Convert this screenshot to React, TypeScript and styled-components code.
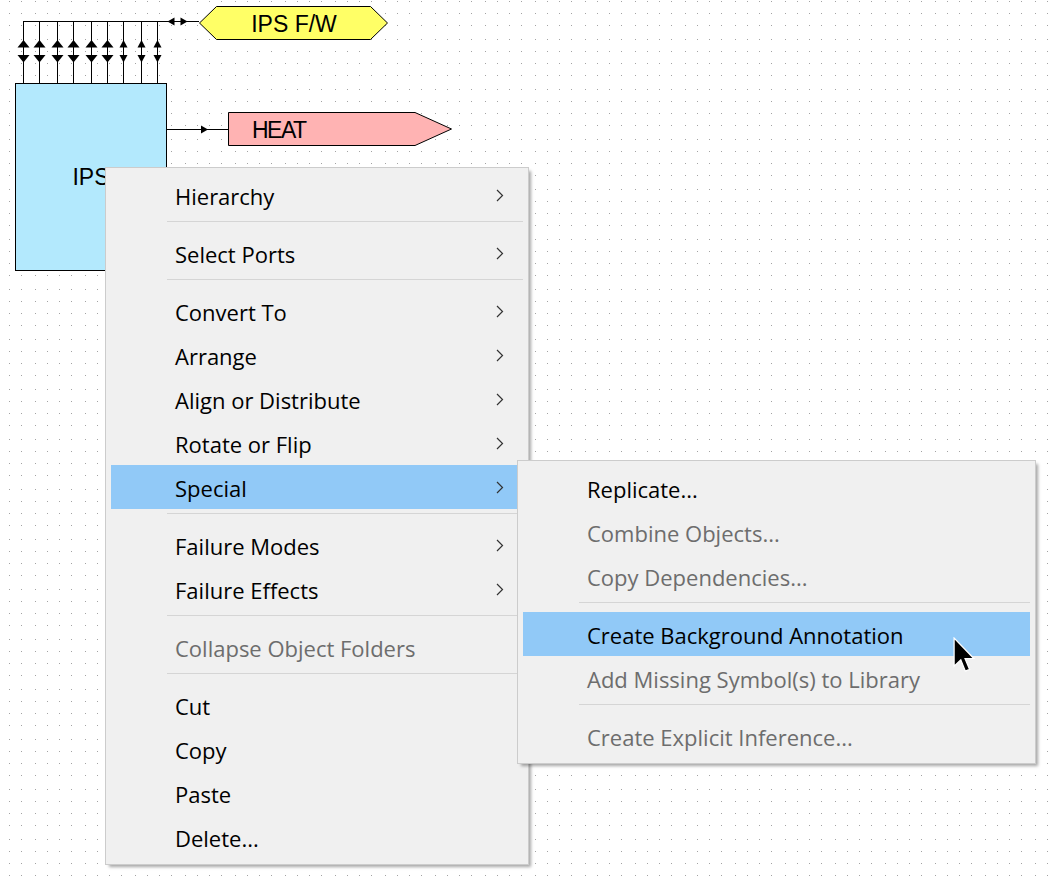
import styled, { createGlobalStyle } from "styled-components";

const GlobalStyle = createGlobalStyle`
  html, body {
    margin: 0;
    padding: 0;
    background: #ffffff;
  }
`;

type MenuEntry =
  | { kind: "item"; label: string; sub?: boolean; disabled?: boolean; active?: boolean }
  | { kind: "sep" };

const mainMenu: MenuEntry[] = [
  { kind: "item", label: "Hierarchy", sub: true },
  { kind: "sep" },
  { kind: "item", label: "Select Ports", sub: true },
  { kind: "sep" },
  { kind: "item", label: "Convert To", sub: true },
  { kind: "item", label: "Arrange", sub: true },
  { kind: "item", label: "Align or Distribute", sub: true },
  { kind: "item", label: "Rotate or Flip", sub: true },
  { kind: "item", label: "Special", sub: true, active: true },
  { kind: "sep" },
  { kind: "item", label: "Failure Modes", sub: true },
  { kind: "item", label: "Failure Effects", sub: true },
  { kind: "sep" },
  { kind: "item", label: "Collapse Object Folders", disabled: true },
  { kind: "sep" },
  { kind: "item", label: "Cut" },
  { kind: "item", label: "Copy" },
  { kind: "item", label: "Paste" },
  { kind: "item", label: "Delete..." },
];

const specialMenu: MenuEntry[] = [
  { kind: "item", label: "Replicate..." },
  { kind: "item", label: "Combine Objects...", disabled: true },
  { kind: "item", label: "Copy Dependencies...", disabled: true },
  { kind: "sep" },
  { kind: "item", label: "Create Background Annotation", active: true },
  { kind: "item", label: "Add Missing Symbol(s) to Library", disabled: true },
  { kind: "sep" },
  { kind: "item", label: "Create Explicit Inference...", disabled: true },
];

// bus pin x positions, the last three have the small arrow heads
const pins = [23, 39, 57, 73, 91, 107, 123, 141, 157];

const App = () => {
  return (
    <>
      <GlobalStyle />
      <Canvas>
        <GridLayer width={1048} height={882}>
          <defs>
            <pattern id="dots" x={9} y={1} width={50} height={50} patternUnits="userSpaceOnUse">
              {[0, 12, 26, 38].map((dx) =>
                [0, 12, 24, 38].map((dy) => (
                  <rect key={`${dx}-${dy}`} x={dx} y={dy} width={1} height={1} fill="#a3a3a3" />
                ))
              )}
            </pattern>
          </defs>
          <rect width={1048} height={882} fill="url(#dots)" />
        </GridLayer>

        <WireLayer width={1048} height={882}>
          <g stroke="#000" strokeWidth={1} shapeRendering="crispEdges">
            <line x1={23} y1={21.5} x2={199} y2={21.5} />
            {pins.map((x) => (
              <line key={x} x1={x + 0.5} y1={21} x2={x + 0.5} y2={83} />
            ))}
            <line x1={166} y1={129.5} x2={229} y2={129.5} />
          </g>
          <g fill="#000">
            {pins.map((x, i) => {
              const w = i < 6 ? 6 : 4;
              const cx = x + 0.5;
              return (
                <g key={x}>
                  <polygon points={`${cx},40 ${cx - w},47.5 ${cx + w},47.5`} />
                  <polygon points={`${cx - w},55 ${cx + w},55 ${cx},62.5`} />
                </g>
              );
            })}
            <polygon points="167.5,21.5 174.5,17.5 174.5,25.5" />
            <polygon points="180.5,17.5 187.5,21.5 180.5,25.5" />
            <polygon points="201,125.5 208,129.5 201,133.5" />
          </g>
        </WireLayer>

        <Block>IPS</Block>

        <PortLabel $left={199} $top={6} $width={190} $height={35} $align="center">
          <PortShape viewBox="0 0 190 35">
            <polygon
              points="0.5,17 17.5,0.5 171.5,0.5 188.5,17 171.5,33.5 17.5,33.5"
              fill="#ffff66"
              stroke="#000"
            />
          </PortShape>
          <PortText>IPS F/W</PortText>
        </PortLabel>

        <PortLabel $left={228} $top={112} $width={225} $height={35} $align="flex-start">
          <PortShape viewBox="0 0 225 35">
            <polygon
              points="0.5,0.5 187,0.5 223.5,17 187,33.5 0.5,33.5"
              fill="#ffb3b3"
              stroke="#000"
            />
          </PortShape>
          <PortText $tight>HEAT</PortText>
        </PortLabel>

        <Menu $left={105} $top={167} $width={424}>
          {mainMenu.map((e, i) => renderEntry(e, i))}
        </Menu>

        <Menu $left={517} $top={460} $width={519}>
          {specialMenu.map((e, i) => renderEntry(e, i))}
        </Menu>

        <Cursor width={23} height={37} viewBox="0 0 13 21">
          <path
            d="M0.6,0.6 L0.6,16.6 L4.4,13 L7,19.4 L9.4,18.4 L6.8,12.2 L11.8,12.2 Z"
            fill="#000"
            stroke="#fff"
            strokeWidth={0.7}
            strokeLinejoin="miter"
          />
        </Cursor>
      </Canvas>
    </>
  );
};

function renderEntry(e: MenuEntry, i: number) {
  if (e.kind === "sep") return <Separator key={i} />;
  return (
    <Item key={i} $active={!!e.active} $disabled={!!e.disabled}>
      <span>{e.label}</span>
      {e.sub && (
        <Chevron width={8} height={13} viewBox="0 0 8 13">
          <polyline points="1,1 6.5,6.5 1,12" fill="none" stroke="#333" strokeWidth={1.2} />
        </Chevron>
      )}
    </Item>
  );
}

export default App;

const Canvas = styled.div`
  position: relative;
  width: 1048px;
  height: 882px;
  overflow: hidden;
  background: #ffffff;
`;

const GridLayer = styled.svg`
  position: absolute;
  left: 0;
  top: 0;
`;

const WireLayer = styled.svg`
  position: absolute;
  left: 0;
  top: 0;
`;

const Block = styled.div`
  position: absolute;
  left: 15px;
  top: 83px;
  width: 152px;
  height: 188px;
  box-sizing: border-box;
  border: 1px solid #000;
  background: #b3e9fd;
  display: flex;
  align-items: center;
  justify-content: center;
  font-family: "Liberation Sans", Arial, sans-serif;
  font-size: 23px;
  color: #000;
`;

const PortLabel = styled.div<{
  $left: number;
  $top: number;
  $width: number;
  $height: number;
  $align: string;
}>`
  position: absolute;
  left: ${(p) => p.$left}px;
  top: ${(p) => p.$top}px;
  width: ${(p) => p.$width}px;
  height: ${(p) => p.$height}px;
  display: flex;
  align-items: center;
  justify-content: ${(p) => p.$align};
  padding-left: ${(p) => (p.$align === "center" ? 0 : 24)}px;
  box-sizing: border-box;
`;

const PortShape = styled.svg`
  position: absolute;
  inset: 0;
  width: 100%;
  height: 100%;
`;

const PortText = styled.span<{ $tight?: boolean }>`
  position: relative;
  font-family: "Liberation Sans", Arial, sans-serif;
  font-size: 23px;
  letter-spacing: ${(p) => (p.$tight ? "-1.5px" : "0")};
  color: #000;
  margin-top: 1px;
`;

const Menu = styled.div<{ $left: number; $top: number; $width: number }>`
  position: absolute;
  left: ${(p) => p.$left}px;
  top: ${(p) => p.$top}px;
  width: ${(p) => p.$width}px;
  box-sizing: border-box;
  display: flex;
  flex-direction: column;
  padding: 5px;
  background: #f0f0f0;
  border: 1px solid #cccccc;
  box-shadow: 3px 3px 3px -1px rgba(0, 0, 0, 0.35);
  font-family: "Open Sans", "Noto Sans", sans-serif;
  font-size: 22px;
`;

const Item = styled.div<{ $active: boolean; $disabled: boolean }>`
  display: flex;
  align-items: center;
  height: 44px;
  box-sizing: border-box;
  padding: 1px 0 0 64px;
  background: ${(p) => (p.$active ? "#91c9f7" : "transparent")};
  color: ${(p) => (p.$disabled ? "#6d6d6d" : "#000")};
  white-space: nowrap;
`;

const Chevron = styled.svg`
  margin-left: auto;
  margin-right: 19px;
  margin-top: -1px;
`;

const Separator = styled.div`
  height: 1px;
  margin: 4px 0 9px 56px;
  background: #d5d5d5;
`;

const Cursor = styled.svg`
  position: absolute;
  left: 953px;
  top: 637px;
`;
